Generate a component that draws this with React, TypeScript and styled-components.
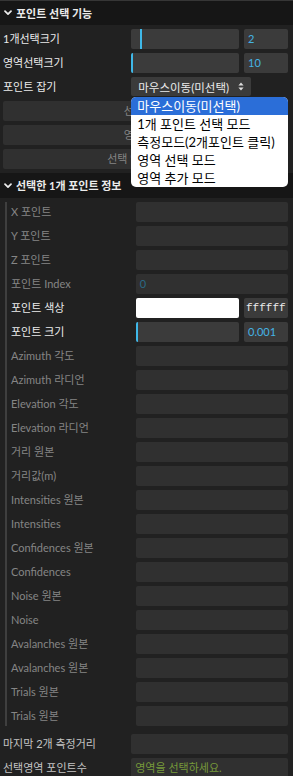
import React from "react";
import styled, { createGlobalStyle } from "styled-components";

const GlobalStyle = createGlobalStyle`
  html, body { margin: 0; padding: 0; background: #212121; overflow: hidden; }
  * { box-sizing: border-box; }
`;

const FONT = `Lato, "Noto Sans CJK KR", "Noto Sans", sans-serif`;
const MONO = `"Liberation Mono", "DejaVu Sans Mono", monospace`;

const Panel = styled.div`
  width: 293px;
  background: #212121;
  font-family: ${FONT};
  font-size: 11px;
  color: #ebebeb;
`;

const FolderTitle = styled.div<{ $top?: boolean }>`
  height: 25px;
  display: flex;
  align-items: center;
  gap: 4px;
  padding-left: 4px;
  background: #161616;
  border-top: ${(p) => (p.$top ? "1px solid #363636" : "none")};
  font-weight: 700;
  font-size: 11px;
  color: #ebebeb;
  line-height: 1;
`;

const Children = styled.div`
  display: flex;
  flex-direction: column;
  gap: 4px;
  padding: 4px 0;
`;

const Nested = styled.div`
  display: flex;
  flex-direction: column;
  gap: 4px;
  margin: 4px 0 4px 5px;
  border-left: 2px solid #3f3f3f;
`;

const Row = styled.div<{ $indent: number }>`
  display: flex;
  align-items: center;
  height: 20px;
  padding: 0 5px 0 ${(p) => p.$indent}px;
`;

const Name = styled.div<{ $tone: "on" | "off" | "mid" }>`
  width: 45%;
  flex-shrink: 0;
  white-space: nowrap;
  line-height: 20px;
  color: ${(p) => (p.$tone === "on" ? "#ebebeb" : p.$tone === "mid" ? "#c4c4c4" : "#858585")};
`;

const Widget = styled.div`
  position: relative;
  flex: 1;
  display: flex;
  gap: 5px;
  height: 20px;
`;

const Box = styled.div<{ $off?: boolean; $color?: string; $fixed?: boolean; $bg?: string; $mono?: boolean }>`
  position: relative;
  flex: ${(p) => (p.$fixed ? "0 0 44px" : "1")};
  height: 20px;
  border-radius: 2px;
  background: ${(p) => p.$bg ?? (p.$off ? "#303030" : "#3b3b3b")};
  color: ${(p) => p.$color ?? "#ebebeb"};
  font-family: ${(p) => (p.$mono ? MONO : "inherit")};
  padding: 0 ${(p) => (p.$mono ? 2 : 4)}px;
  line-height: 20px;
  white-space: nowrap;
  overflow: hidden;
`;

const Fill = styled.div`
  position: absolute;
  left: 0;
  top: 0;
  height: 100%;
  border-right: 2px solid #3fb8e8;
`;

const Button = styled.div`
  flex: 1;
  height: 20px;
  border-radius: 2px;
  background: #303030;
  color: #858585;
  text-align: center;
  line-height: 20px;
  white-space: nowrap;
`;

const SelectBox = styled.div`
  display: inline-flex;
  align-items: center;
  gap: 9px;
  height: 19px;
  padding: 0 7px 0 7px;
  border-radius: 2px;
  background: #3b3b3b;
  color: #ebebeb;
  font-size: 11.5px;
  white-space: nowrap;
`;

const Popup = styled.div`
  position: absolute;
  top: 20px;
  left: 0;
  right: 0;
  z-index: 10;
  background: #ffffff;
  border-radius: 5px;
  overflow: hidden;
  font-size: 13px;
`;

const Option = styled.div<{ $active?: boolean }>`
  height: 18px;
  line-height: 18px;
  padding-left: 6px;
  white-space: nowrap;
  color: ${(p) => (p.$active ? "#ffffff" : "#000000")};
  background: ${(p) => (p.$active ? "#2b6ed8" : "transparent")};
`;

const Chevron = () => (
  <svg width="8" height="6" viewBox="0 0 8 6">
    <path d="M1 1.2 L4 4.2 L7 1.2" fill="none" stroke="#ebebeb" strokeWidth="1.7" strokeLinecap="round" strokeLinejoin="round" />
  </svg>
);

const UpDown = () => (
  <svg width="6" height="9" viewBox="0 0 6 9">
    <path d="M3 0.5 L5.6 3.5 H0.4 Z M3 8.5 L5.6 5.5 H0.4 Z" fill="#dcdcdc" />
  </svg>
);

type Slider = { name: string; value: string; pos: number; indent: number };

const SliderRow = ({ name, value, pos, indent }: Slider) => (
  <Row $indent={indent}>
    <Name $tone="on">{name}</Name>
    <Widget>
      <Box>
        <Fill style={{ width: pos }} />
      </Box>
      <Box $fixed $color="#45b4e4">{value}</Box>
    </Widget>
  </Row>
);

const infoRows: { name: string; value?: string }[] = [
  { name: "X 포인트" },
  { name: "Y 포인트" },
  { name: "Z 포인트" },
  { name: "포인트 Index", value: "0" },
];

const infoRows2 = [
  "Azimuth 각도",
  "Azimuth 라디언",
  "Elevation 각도",
  "Elevation 라디언",
  "거리 원본",
  "거리값(m)",
  "Intensities 원본",
  "Intensities",
  "Confidences 원본",
  "Confidences",
  "Noise 원본",
  "Noise",
  "Avalanches 원본",
  "Avalanches 원본",
  "Trials 원본",
  "Trials 원본",
];

const options = ["마우스이동(미선택)", "1개 포인트 선택 모드", "측정모드(2개포인트 클릭)", "영역 선택 모드", "영역 추가 모드"];

export default function App() {
  return (
    <>
      <GlobalStyle />
      <Panel>
        <FolderTitle $top>
          <Chevron />
          포인트 선택 기능
        </FolderTitle>
        <Children>
          <SliderRow name="1개선택크기" value="2" pos={11} indent={3} />
          <SliderRow name="영역선택크기" value="10" pos={0} indent={3} />
          <Row $indent={3}>
            <Name $tone="on">포인트 잡기</Name>
            <Widget>
              <SelectBox>
                마우스이동(미선택)
                <UpDown />
              </SelectBox>
              <Popup>
                {options.map((o, i) => (
                  <Option key={o} $active={i === 0}>
                    {o}
                  </Option>
                ))}
              </Popup>
            </Widget>
          </Row>
          <Row $indent={3}>
            <Button>선택 해제</Button>
          </Row>
          <Row $indent={3}>
            <Button>영역 해제</Button>
          </Row>
          <Row $indent={3}>
            <Button>선택 영역 초기화</Button>
          </Row>
          <div>
            <FolderTitle>
              <Chevron />
              선택한 1개 포인트 정보
            </FolderTitle>
            <Nested>
              {infoRows.map((r) => (
                <Row $indent={4} key={r.name}>
                  <Name $tone="off">{r.name}</Name>
                  <Widget>
                    <Box $off $color="#2a6a86">{r.value ?? ""}</Box>
                  </Widget>
                </Row>
              ))}
              <Row $indent={4}>
                <Name $tone="on">포인트 색상</Name>
                <Widget>
                  <Box $bg="#ffffff" />
                  <Box $fixed $mono>ffffff</Box>
                </Widget>
              </Row>
              <SliderRow name="포인트 크기" value="0.001" pos={0} indent={4} />
              {infoRows2.map((n, i) => (
                <Row $indent={4} key={n + i}>
                  <Name $tone="off">{n}</Name>
                  <Widget>
                    <Box $off />
                  </Widget>
                </Row>
              ))}
            </Nested>
          </div>
          <Row $indent={3}>
            <Name $tone="mid">마지막 2개 측정거리</Name>
            <Widget>
              <Box $off />
            </Widget>
          </Row>
          <Row $indent={3}>
            <Name $tone="mid">선택영역 포인트수</Name>
            <Widget>
              <Box $off $color="#76993a">영역을 선택하세요.</Box>
            </Widget>
          </Row>
        </Children>
      </Panel>
    </>
  );
}
